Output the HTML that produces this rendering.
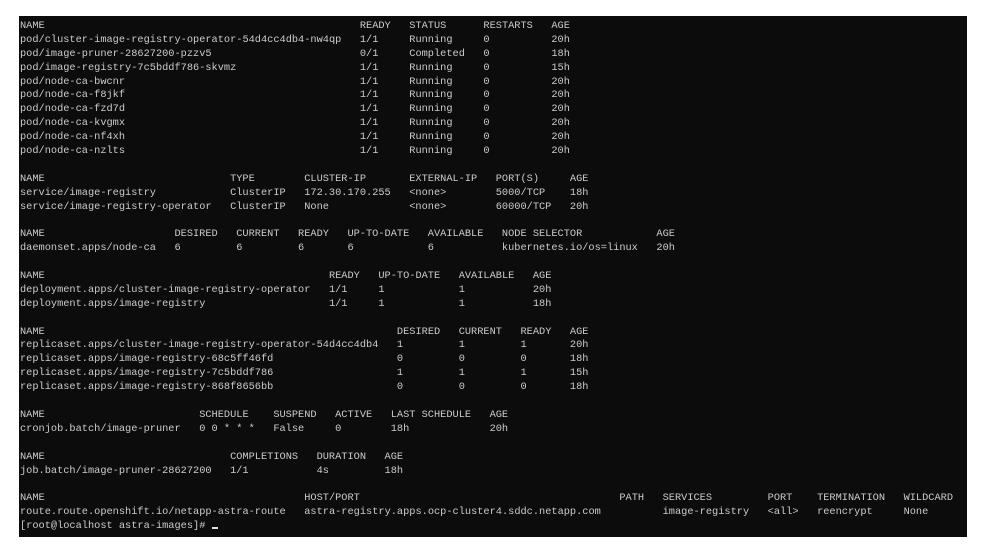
<!DOCTYPE html>
<html><head><meta charset="utf-8"><style>
html,body{margin:0;padding:0;background:#fff;width:998px;height:551px;overflow:hidden}
#t{position:absolute;left:19px;top:16px;width:948px;height:521px;background:#0c0c0c}
#c{position:absolute;left:20px;top:20px;font-family:"Liberation Mono",monospace;font-size:10.3px;line-height:13.9px;color:#cccccc}
#c div{height:13.9px;white-space:pre}
#c b{font-weight:normal;display:inline-block}
.cur{display:inline-block;width:6px;height:2px;background:#ddd;vertical-align:-1px}
</style></head><body>
<div id="t"></div>
<div id="c">
<div><b style="width:55ch">NAME</b><b style="width:8ch">READY</b><b style="width:12ch">STATUS</b><b style="width:11ch">RESTARTS</b><b>AGE</b></div>
<div><b style="width:55ch">pod/cluster-image-registry-operator-54d4cc4db4-nw4qp</b><b style="width:8ch">1/1</b><b style="width:12ch">Running</b><b style="width:11ch">0</b><b>20h</b></div>
<div><b style="width:55ch">pod/image-pruner-28627200-pzzv5</b><b style="width:8ch">0/1</b><b style="width:12ch">Completed</b><b style="width:11ch">0</b><b>18h</b></div>
<div><b style="width:55ch">pod/image-registry-7c5bddf786-skvmz</b><b style="width:8ch">1/1</b><b style="width:12ch">Running</b><b style="width:11ch">0</b><b>15h</b></div>
<div><b style="width:55ch">pod/node-ca-bwcnr</b><b style="width:8ch">1/1</b><b style="width:12ch">Running</b><b style="width:11ch">0</b><b>20h</b></div>
<div><b style="width:55ch">pod/node-ca-f8jkf</b><b style="width:8ch">1/1</b><b style="width:12ch">Running</b><b style="width:11ch">0</b><b>20h</b></div>
<div><b style="width:55ch">pod/node-ca-fzd7d</b><b style="width:8ch">1/1</b><b style="width:12ch">Running</b><b style="width:11ch">0</b><b>20h</b></div>
<div><b style="width:55ch">pod/node-ca-kvgmx</b><b style="width:8ch">1/1</b><b style="width:12ch">Running</b><b style="width:11ch">0</b><b>20h</b></div>
<div><b style="width:55ch">pod/node-ca-nf4xh</b><b style="width:8ch">1/1</b><b style="width:12ch">Running</b><b style="width:11ch">0</b><b>20h</b></div>
<div><b style="width:55ch">pod/node-ca-nzlts</b><b style="width:8ch">1/1</b><b style="width:12ch">Running</b><b style="width:11ch">0</b><b>20h</b></div>
<div></div>
<div><b style="width:34ch">NAME</b><b style="width:12ch">TYPE</b><b style="width:17ch">CLUSTER-IP</b><b style="width:14ch">EXTERNAL-IP</b><b style="width:12ch">PORT(S)</b><b>AGE</b></div>
<div><b style="width:34ch">service/image-registry</b><b style="width:12ch">ClusterIP</b><b style="width:17ch">172.30.170.255</b><b style="width:14ch">&lt;none&gt;</b><b style="width:12ch">5000/TCP</b><b>18h</b></div>
<div><b style="width:34ch">service/image-registry-operator</b><b style="width:12ch">ClusterIP</b><b style="width:17ch">None</b><b style="width:14ch">&lt;none&gt;</b><b style="width:12ch">60000/TCP</b><b>20h</b></div>
<div></div>
<div><b style="width:25ch">NAME</b><b style="width:10ch">DESIRED</b><b style="width:10ch">CURRENT</b><b style="width:8ch">READY</b><b style="width:13ch">UP-TO-DATE</b><b style="width:12ch">AVAILABLE</b><b style="width:25ch">NODE SELECTOR</b><b>AGE</b></div>
<div><b style="width:25ch">daemonset.apps/node-ca</b><b style="width:10ch">6</b><b style="width:10ch">6</b><b style="width:8ch">6</b><b style="width:13ch">6</b><b style="width:12ch">6</b><b style="width:25ch">kubernetes.io/os=linux</b><b>20h</b></div>
<div></div>
<div><b style="width:50ch">NAME</b><b style="width:8ch">READY</b><b style="width:13ch">UP-TO-DATE</b><b style="width:12ch">AVAILABLE</b><b>AGE</b></div>
<div><b style="width:50ch">deployment.apps/cluster-image-registry-operator</b><b style="width:8ch">1/1</b><b style="width:13ch">1</b><b style="width:12ch">1</b><b>20h</b></div>
<div><b style="width:50ch">deployment.apps/image-registry</b><b style="width:8ch">1/1</b><b style="width:13ch">1</b><b style="width:12ch">1</b><b>18h</b></div>
<div></div>
<div><b style="width:61ch">NAME</b><b style="width:10ch">DESIRED</b><b style="width:10ch">CURRENT</b><b style="width:8ch">READY</b><b>AGE</b></div>
<div><b style="width:61ch">replicaset.apps/cluster-image-registry-operator-54d4cc4db4</b><b style="width:10ch">1</b><b style="width:10ch">1</b><b style="width:8ch">1</b><b>20h</b></div>
<div><b style="width:61ch">replicaset.apps/image-registry-68c5ff46fd</b><b style="width:10ch">0</b><b style="width:10ch">0</b><b style="width:8ch">0</b><b>18h</b></div>
<div><b style="width:61ch">replicaset.apps/image-registry-7c5bddf786</b><b style="width:10ch">1</b><b style="width:10ch">1</b><b style="width:8ch">1</b><b>15h</b></div>
<div><b style="width:61ch">replicaset.apps/image-registry-868f8656bb</b><b style="width:10ch">0</b><b style="width:10ch">0</b><b style="width:8ch">0</b><b>18h</b></div>
<div></div>
<div><b style="width:29ch">NAME</b><b style="width:12ch">SCHEDULE</b><b style="width:10ch">SUSPEND</b><b style="width:9ch">ACTIVE</b><b style="width:16ch">LAST SCHEDULE</b><b>AGE</b></div>
<div><b style="width:29ch">cronjob.batch/image-pruner</b><b style="width:12ch">0 0 * * *</b><b style="width:10ch">False</b><b style="width:9ch">0</b><b style="width:16ch">18h</b><b>20h</b></div>
<div></div>
<div><b style="width:34ch">NAME</b><b style="width:14ch">COMPLETIONS</b><b style="width:11ch">DURATION</b><b>AGE</b></div>
<div><b style="width:34ch">job.batch/image-pruner-28627200</b><b style="width:14ch">1/1</b><b style="width:11ch">4s</b><b>18h</b></div>
<div></div>
<div><b style="width:46ch">NAME</b><b style="width:51ch">HOST/PORT</b><b style="width:7ch">PATH</b><b style="width:17ch">SERVICES</b><b style="width:8ch">PORT</b><b style="width:14ch">TERMINATION</b><b>WILDCARD</b></div>
<div><b style="width:46ch">route.route.openshift.io/netapp-astra-route</b><b style="width:51ch">astra-registry.apps.ocp-cluster4.sddc.netapp.com</b><b style="width:7ch"></b><b style="width:17ch">image-registry</b><b style="width:8ch">&lt;all&gt;</b><b style="width:14ch">reencrypt</b><b>None</b></div>
<div>[root@localhost astra-images]# <span class="cur"></span></div>
</div>
</body></html>
